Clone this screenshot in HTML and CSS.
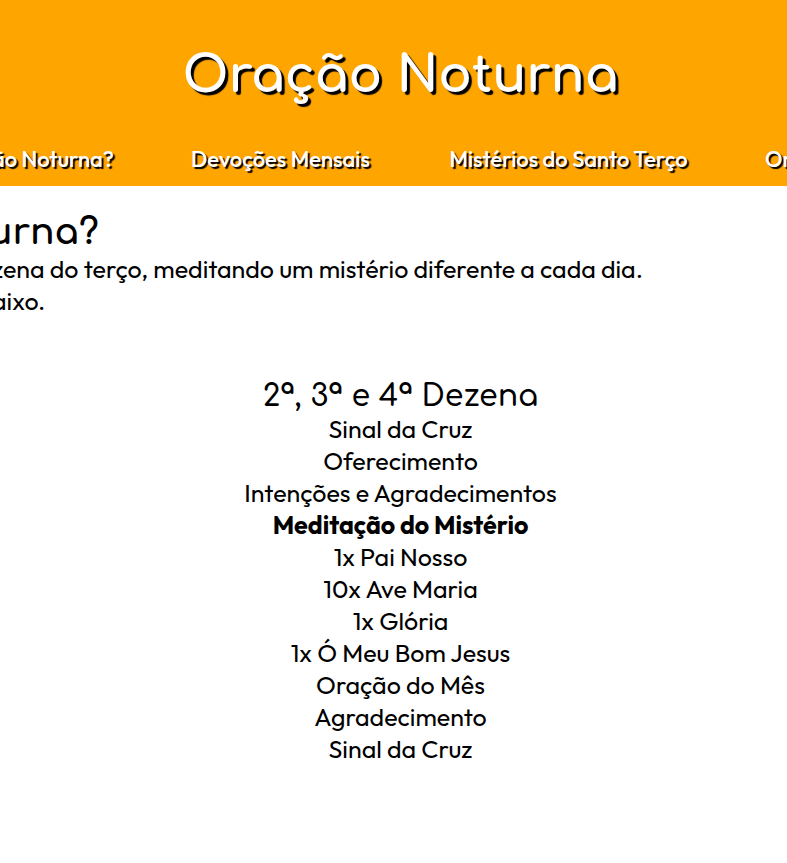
FILE: index.html
```html
<!DOCTYPE html>
<html lang="pt-BR">
<head>
<meta charset="utf-8">
<meta name="viewport" content="width=device-width, initial-scale=1">
<title>Oração Noturna</title>
<link rel="stylesheet" href="styles.css">
</head>
<body>
<header class="header">
  <h1 class="title">Oração Noturna</h1>
  <nav class="nav">
    <a class="link link-first" href="#inicio">ão Noturna?</a>
    <a class="link" href="#devocoes">Devoções Mensais</a>
    <a class="link" href="#misterios">Mistérios do Santo Terço</a>
    <a class="link" href="#oracoes">Or</a>
  </nav>
</header>
<main>
  <section class="intro" id="inicio">
    <h2 class="heading">urna?</h2>
    <p>zena do terço, meditando um mistério diferente a cada dia.</p>
    <p>aixo.</p>
  </section>
  <section class="decade">
    <h3 class="subheading">2ª, 3ª e 4ª Dezena</h3>
    <ul class="steps">
      <li>Sinal da Cruz</li>
      <li>Oferecimento</li>
      <li>Intenções e Agradecimentos</li>
      <li><strong>Meditação do Mistério</strong></li>
      <li>1x Pai Nosso</li>
      <li>10x Ave Maria</li>
      <li>1x Glória</li>
      <li>1x Ó Meu Bom Jesus</li>
      <li>Oração do Mês</li>
      <li>Agradecimento</li>
      <li>Sinal da Cruz</li>
    </ul>
  </section>
</main>
</body>
</html>
```
FILE: styles.css
```css
* {
  box-sizing: border-box;
  margin: 0;
  padding: 0;
}

body {
  background: #fff;
  color: #000;
  font-family: Outfit, Lato, sans-serif;
  font-size: 25px;
  line-height: 32px;
  overflow-x: hidden;
}

.header {
  background: orange;
  color: #fff;
  padding: 42px 0 10px;
  overflow: hidden;
}

.title {
  font-family: Comfortaa, Lato, sans-serif;
  font-size: 50px;
  font-weight: 700;
  line-height: 68px;
  text-align: center;
  text-shadow: 3px 3px 1px #000;
  padding-left: 14px;
}

.nav {
  display: grid;
  grid-template-columns: 114px 183px 243px max-content;
  column-gap: 75px;
  margin-top: 32px;
  font-size: 22px;
  font-weight: 500;
  line-height: 34px;
}

.link {
  color: #fff;
  text-align: center;
  text-decoration: none;
  text-shadow: 2px 2px 1px #000;
  white-space: nowrap;
}

.link-first {
  display: flex;
  justify-content: flex-end;
}

.intro {
  margin-left: -8px;
  padding-top: 25px;
  white-space: nowrap;
}

.heading,
.subheading {
  font-family: Comfortaa, Lato, sans-serif;
}

.heading {
  font-size: 36px;
  font-weight: 700;
  line-height: 42px;
  margin-left: -4px;
}

.decade {
  margin-top: 64px;
  padding-left: 14px;
  text-align: center;
}

.subheading {
  font-size: 30px;
  font-weight: 600;
  line-height: 32px;
}

.steps {
  list-style: none;
}
```
